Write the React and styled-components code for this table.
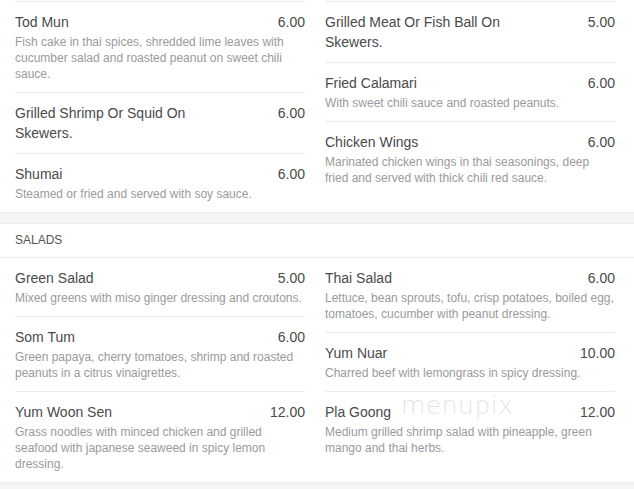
import React from "react";
import styled, { createGlobalStyle } from "styled-components";

const Global = createGlobalStyle`
  html, body { margin: 0; padding: 0; background: #ffffff; }
  body { font-family: "Liberation Sans", Arial, sans-serif; }
`;

const Page = styled.div`
  position: relative;
  width: 634px;
  background: #fff;
`;

const Section = styled.section`
  background: #fff;
`;

const Grid = styled.div`
  display: grid;
  grid-template-columns: 290px 290px;
  column-gap: 20px;
  padding: 0 19px 0 15px;
  align-items: start;
`;

const Column = styled.div`
  display: flex;
  flex-direction: column;
  padding-top: ${(p) => (p.$offset ? "1px" : "0")};
`;

const Item = styled.div`
  padding: 10px 0;
  border-top: ${(p) => (p.$noBorder ? "none" : "1px solid #ececec")};
`;

const Head = styled.div`
  display: flex;
  justify-content: space-between;
  align-items: flex-start;
  font-size: 14px;
  line-height: 20px;
  color: #4a4a4a;
`;

const Name = styled.div`
  max-width: 204px;
`;

const Price = styled.div`
  flex: none;
`;

const Desc = styled.div`
  margin-top: 2px;
  font-size: 12px;
  line-height: 16px;
  color: #9a9a9a;
`;

const Band = styled.div`
  height: 10px;
  background: #f5f5f5;
  border-top: 1px solid #ededed;
  border-bottom: 1px solid #ededed;
`;

const Header = styled.div`
  padding: 10px 15px;
  font-size: 12px;
  line-height: 13px;
  color: #555;
  text-transform: uppercase;
  border-bottom: 1px solid #ececec;
`;

const Watermark = styled.div`
  position: absolute;
  left: 401px;
  top: 391px;
  font-family: "DejaVu Sans", sans-serif;
  font-weight: 200;
  font-size: 25px;
  letter-spacing: 0.5px;
  color: rgba(200, 200, 200, 0.5);
  pointer-events: none;
`;

const appetizersLeft = [
  { n: "Tod Mun", p: "6.00", d: "Fish cake in thai spices, shredded lime leaves with cucumber salad and roasted peanut on sweet chili sauce." },
  { n: "Grilled Shrimp Or Squid On Skewers.", p: "6.00" },
  { n: "Shumai", p: "6.00", d: "Steamed or fried and served with soy sauce." },
];
const appetizersRight = [
  { n: "Grilled Meat Or Fish Ball On Skewers.", p: "5.00" },
  { n: "Fried Calamari", p: "6.00", d: "With sweet chili sauce and roasted peanuts." },
  { n: "Chicken Wings", p: "6.00", d: "Marinated chicken wings in thai seasonings, deep fried and served with thick chili red sauce." },
];
const saladsLeft = [
  { n: "Green Salad", p: "5.00", d: "Mixed greens with miso ginger dressing and croutons." },
  { n: "Som Tum", p: "6.00", d: "Green papaya, cherry tomatoes, shrimp and roasted peanuts in a citrus vinaigrettes." },
  { n: "Yum Woon Sen", p: "12.00", d: "Grass noodles with minced chicken and grilled seafood with japanese seaweed in spicy lemon dressing." },
];
const saladsRight = [
  { n: "Thai Salad", p: "6.00", d: "Lettuce, bean sprouts, tofu, crisp potatoes, boiled egg, tomatoes, cucumber with peanut dressing." },
  { n: "Yum Nuar", p: "10.00", d: "Charred beef with lemongrass in spicy dressing." },
  { n: "Pla Goong", p: "12.00", d: "Medium grilled shrimp salad with pineapple, green mango and thai herbs." },
];

function MenuColumn({ items, firstBorder, offset }) {
  return (
    <Column $offset={offset}>
      {items.map((it, i) => (
        <Item key={it.n} $noBorder={i === 0 && !firstBorder}>
          <Head>
            <Name>{it.n}</Name>
            <Price>{it.p}</Price>
          </Head>
          {it.d && <Desc>{it.d}</Desc>}
        </Item>
      ))}
    </Column>
  );
}

export default function App() {
  return (
    <Page>
      <Global />
      <Section>
        <Grid>
          <MenuColumn items={appetizersLeft} firstBorder offset />
          <MenuColumn items={appetizersRight} firstBorder offset />
        </Grid>
      </Section>
      <Band />
      <Section>
        <Header>Salads</Header>
        <Grid>
          <MenuColumn items={saladsLeft} />
          <MenuColumn items={saladsRight} />
        </Grid>
      </Section>
      <Band />
      <Watermark>menupix</Watermark>
    </Page>
  );
}
